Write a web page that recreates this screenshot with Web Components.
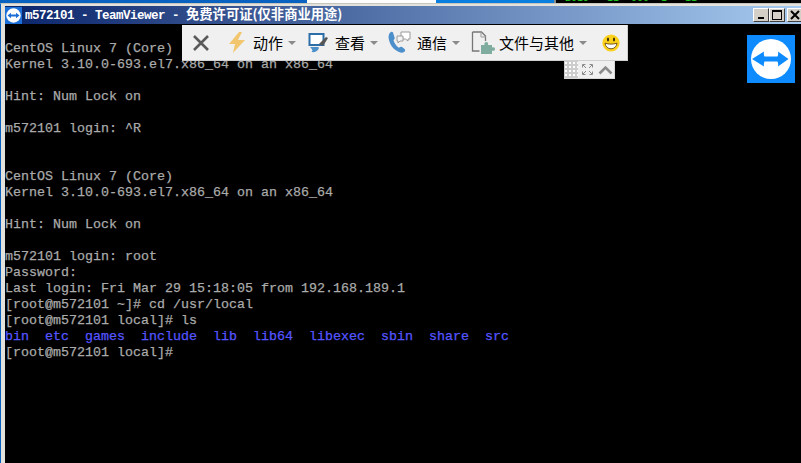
<!DOCTYPE html>
<html>
<head>
<meta charset="utf-8">
<title>TeamViewer</title>
<style>
  html, body { margin: 0; height: 100%; background: #000; overflow: hidden; }
</style>
</head>
<body>
<tv-desktop>
  <tv-window>
    <tv-terminal></tv-terminal>
    <tv-toolbar slot="overlay">
      <tv-tool icon="bolt" style="--gap:7px;width:80px">动作</tv-tool>
      <tv-tool icon="view" style="--gap:6px;width:80px">查看</tv-tool>
      <tv-tool icon="comm" style="--gap:6px;width:83px">通信</tv-tool>
      <tv-tool icon="file" style="--gap:3px;width:131px">文件与其他</tv-tool>
    </tv-toolbar>
    <tv-logo slot="overlay"></tv-logo>
  </tv-window>
</tv-desktop>

<script>
class TvDesktop extends HTMLElement {
  constructor() {
    super()
    this.attachShadow({ mode: 'open' })
    this.shadowRoot.innerHTML = `
      <style>
        :host { display: flex; flex-direction: column; width: 801px; height: 463px; overflow: hidden; }
        .strip { display: flex; height: 3px; flex: none; overflow: hidden; background: #000; }
        .strip i { display: block; height: 100%; flex: none; }
        .clock {
          font: 10px/8px "Liberation Mono", monospace;
          color: #1fd11f;
          margin: -5px 0 0 9px;
          white-space: pre;
        }
      </style>
      <div class="strip">
        <i style="width:307px;background:#0a62c0"></i>
        <i style="width:129px;background:#fdfdfd"></i>
        <i style="width:118px;background:#0a7fe0"></i>
        <i style="width:2px;background:#8a8a8a"></i>
        <span class="clock">2019   11  000  1   11</span>
      </div>
      <slot></slot>
    `
  }
}

class TvWindow extends HTMLElement {
  constructor() {
    super()
    this.attachShadow({ mode: 'open' })
    this.shadowRoot.innerHTML = `
      <style>
        :host {
          display: block;
          flex: 1;
          position: relative;
          min-height: 0;
          background: #e4e2dc;
          border-top: 1px solid #c8c5bc;
          border-left: 1px solid #0a62c0;
          box-sizing: border-box;
          padding: 2px 0 0 4px;
        }
        .inner { display: flex; flex-direction: column; height: 100%; }
        .title {
          display: flex;
          align-items: center;
          height: 18px;
          flex: none;
          background: linear-gradient(90deg, #0a246a, #a6caf0);
          color: #fff;
        }
        .app-icon { width: 17px; height: 17px; margin: 0 3px 0 0; flex: none; }
        .text {
          flex: 1;
          font: bold 12.5px/18px "Liberation Mono", "Noto Sans CJK SC", monospace;
          letter-spacing: -0.5px;
          white-space: pre;
          overflow: hidden;
        }
        .cjk { font: bold 13.3px/18px "Noto Sans CJK SC", sans-serif; letter-spacing: 0; }
        .buttons { display: flex; flex: none; }
        .btn {
          width: 16px;
          height: 14px;
          box-sizing: border-box;
          background: #d4d0c8;
          border: 1px solid;
          border-color: #fff #404040 #404040 #fff;
          display: grid;
          place-items: center;
        }
        .btn svg { display: block; }
        .btn.close { margin-left: 2px; width: 14px; border-right: 0; }
      </style>
      <div class="inner">
        <div class="title">
          <svg class="app-icon" viewBox="0 0 17 17">
            <rect width="17" height="17" fill="#1c6fd6"/>
            <circle cx="8.500" cy="8.500" r="7.200" fill="#fff"/>
            <path d="M2.500 8.500 6 5.800V7.500h5V5.800l3.500 2.700L11 11.200V9.500H6v1.700z" fill="#1c6fd6"/>
          </svg>
          <div class="text">m572101 - TeamViewer - <span class="cjk">免费许可证(仅非商业用途)</span></div>
          <div class="buttons">
            <div class="btn"><svg width="10" height="10"><rect x="2" y="7" width="6" height="2" fill="#000"/></svg></div>
            <div class="btn"><svg width="12" height="10"><rect x="1.500" y="0.500" width="9" height="9" fill="none" stroke="#000"/><rect x="1" y="0" width="10" height="2" fill="#000"/></svg></div>
            <div class="btn close"><svg width="10" height="10"><path d="M1 1l8 8M9 1l-8 8" stroke="#000" stroke-width="2"/></svg></div>
          </div>
        </div>
        <slot></slot>
      </div>
      <slot name="overlay"></slot>
    `
  }
}

const TERMINAL_LINES = [
  '',
  'CentOS Linux 7 (Core)',
  'Kernel 3.10.0-693.el7.x86_64 on an x86_64',
  '',
  'Hint: Num Lock on',
  '',
  'm572101 login: ^R',
  '',
  '',
  'CentOS Linux 7 (Core)',
  'Kernel 3.10.0-693.el7.x86_64 on an x86_64',
  '',
  'Hint: Num Lock on',
  '',
  'm572101 login: root',
  'Password:',
  'Last login: Fri Mar 29 15:18:05 from 192.168.189.1',
  '[root@m572101 ~]# cd /usr/local',
  '[root@m572101 local]# ls',
  '<b>bin</b>  <b>etc</b>  <b>games</b>  <b>include</b>  <b>lib</b>  <b>lib64</b>  <b>libexec</b>  <b>sbin</b>  <b>share</b>  <b>src</b>',
  '[root@m572101 local]#',
]

class TvTerminal extends HTMLElement {
  constructor() {
    super()
    this.attachShadow({ mode: 'open' })
    this.shadowRoot.innerHTML = `
      <style>
        :host {
          display: block;
          flex: 1;
          padding-top: 1px;
          background: #000;
          color: #aaa;
          font: 13.333px/16px "Liberation Mono", "DejaVu Sans Mono", monospace;
          -webkit-text-stroke: 0.25px currentColor;
          overflow: hidden;
        }
        div { height: 16px; white-space: pre; }
        b { color: #5555ff; font-weight: normal; }
      </style>
      ${TERMINAL_LINES.map((line) => `<div>${line}</div>`).join('')}
    `
  }
}

class TvToolbar extends HTMLElement {
  constructor() {
    super()
    this.attachShadow({ mode: 'open' })
    this.shadowRoot.innerHTML = `
      <style>
        :host {
          position: absolute;
          left: 181px;
          top: 21px;
          width: 446px;
          display: block;
        }
        .bar {
          height: 35px;
          background: #f0f0f0;
          border-right: 1px solid #d0d0d0;
          border-bottom: 1px solid #d0d0d0;
          display: flex;
          align-items: center;
        }
        .close { width: 18px; height: 18px; margin: 0 18px 0 10px; flex: none; }
        .smile { width: 18px; height: 18px; flex: none; }
        .handle {
          position: absolute;
          left: 382px;
          top: 36px;
          width: 50px;
          height: 17px;
          background: #f0f0f0;
          border-right: 1px solid #d8d8d8;
          border-bottom: 1px solid #d8d8d8;
          display: flex;
          align-items: center;
        }
        .grip-dots {
          width: 14px;
          height: 17px;
          flex: none;
          background-color: #cdcdcd;
          background-image: radial-gradient(#fff 1.300px, transparent 1.400px);
          background-size: 4px 4px;
        }
      </style>
      <div class="bar">
        <svg class="close" viewBox="0 0 18 18"><path d="M2 2l14 14M16 2L2 16" stroke="#5a5a5a" stroke-width="2.600"/></svg>
        <slot></slot>
        <svg class="smile" viewBox="0 0 18 18">
          <circle cx="9" cy="9" r="8.600" fill="#fbd11c"/>
          <ellipse cx="6" cy="5.600" rx="1" ry="2" fill="#3a2a10"/>
          <ellipse cx="12" cy="5.600" rx="1" ry="2" fill="#3a2a10"/>
          <path d="M3 9.200c3.600 1.200 8.400 1.200 12 0-.4 3.600-3 5.600-6 5.600s-5.600-2-6-5.600z" fill="#fff" stroke="#6a4a10" stroke-width=".9"/>
        </svg>
      </div>
      <div class="handle">
        <div class="grip-dots"></div>
        <svg width="11" height="11" viewBox="0 0 11 11" style="margin-left:4px;flex:none">
          <path d="M.5 3.500v-3h3M7.500.5h3v3M10.500 7.500v3h-3M3.500 10.500h-3v-3M1 1l3 3M10 1L7 4M10 10L7 7M1 10l3-3" fill="none" stroke="#8a8a8a"/>
        </svg>
        <svg width="15" height="10" viewBox="0 0 15 10" style="margin-left:5px;flex:none">
          <path d="M1.500 8.500l6-6 6 6" fill="none" stroke="#8c8c8c" stroke-width="2.600"/>
        </svg>
      </div>
    `
  }
}

const TOOL_ICONS = {
  bolt: `<svg width="18" height="21" viewBox="0 0 18 21"><path d="M11 0 1 12h6L5 21l12-13h-7l4-8z" fill="#f2c66f"/></svg>`,
  view: `<svg width="21" height="21" viewBox="0 0 21 21">
    <path d="M1.500 2h14v11h-14z" fill="#fff" stroke="#2d6ea8" stroke-width="2"/>
    <path d="M2 15h8c1 0 1 1 .5 2-1 2.500-4 3.500-7 3 2-1 .5-3-1.500-5z" fill="#4c8fc9"/>
    <path d="M11 12l7-7 2 1-5 8z" fill="#555"/>
  </svg>`,
  comm: `<svg width="23" height="23" viewBox="0 0 23 23">
    <path d="M3 1c-2 1-3 4-2 8 1 5 5 10 10 12 2 1 5 1 6-1 .6-1-.2-2-1-2.600l-2-1.400c-1-.6-2-.2-3 .8-2-1-5-5-5.500-7.800 1-.6 1.500-1.500 1-2.800L5 1.500C4.600.8 3.800.6 3 1z" fill="#4d8fcb"/>
    <path d="M13 1h9v7h-2v2l-2.500-2H13z" fill="#fff" stroke="#9a9a9a"/>
    <path d="M9 5h6v5h-3l-2 2v-2H9z" fill="#f4f4f4" stroke="#9a9a9a"/>
  </svg>`,
  file: `<svg width="25" height="23" viewBox="0 0 25 23">
    <path d="M1.500 1h9l4 4v5M1.500 1v19h7" fill="none" stroke="#777" stroke-width="1.300"/>
    <path d="M10 1v5h5" fill="none" stroke="#999"/>
    <path d="M10 14h3.500c-.5-2 .5-3 1.800-3s2.300 1 1.700 3H21v2.500c2-.8 3 .2 3 1.500s-1 2.300-3 1.500V23H10z" fill="#7fac9e"/>
  </svg>`,
}

class TvTool extends HTMLElement {
  constructor() {
    super()
    this.attachShadow({ mode: 'open' })
  }

  connectedCallback() {
    this.shadowRoot.innerHTML = `
      <style>
        :host {
          display: flex;
          align-items: center;
          flex: none;
          box-sizing: border-box;
          font: 15px/20px "Noto Sans CJK SC", sans-serif;
          color: #000;
          white-space: nowrap;
        }
        .icon { display: flex; flex: none; margin-right: var(--gap, 6px); }
        .caret {
          width: 0;
          height: 0;
          margin-left: 5px;
          border: 4px solid transparent;
          border-top: 4px solid #8a8a8a;
          border-bottom: 0;
        }
      </style>
      <span class="icon">${TOOL_ICONS[this.getAttribute('icon')]}</span>
      <slot></slot>
      <span class="caret"></span>
    `
  }
}

class TvLogo extends HTMLElement {
  constructor() {
    super()
    this.attachShadow({ mode: 'open' })
    this.shadowRoot.innerHTML = `
      <style>
        :host { position: absolute; right: 6px; top: 31px; width: 48px; height: 48px; display: block; }
        svg { display: block; }
      </style>
      <svg width="48" height="48" viewBox="0 0 48 48">
        <rect width="48" height="48" fill="#0e8cff"/>
        <circle cx="24" cy="24" r="20" fill="#fff"/>
        <path d="M5 24 17 16.500q-.5 3 .5 5h13q1-2 .5-5L41.500 24 31 31.500q.5-3-.5-5h-13q-1 2-.5 5z" fill="#0e8cff"/>
      </svg>
    `
  }
}

customElements.define('tv-desktop', TvDesktop)
customElements.define('tv-window', TvWindow)
customElements.define('tv-terminal', TvTerminal)
customElements.define('tv-toolbar', TvToolbar)
customElements.define('tv-tool', TvTool)
customElements.define('tv-logo', TvLogo)
</script>
</body>
</html>
